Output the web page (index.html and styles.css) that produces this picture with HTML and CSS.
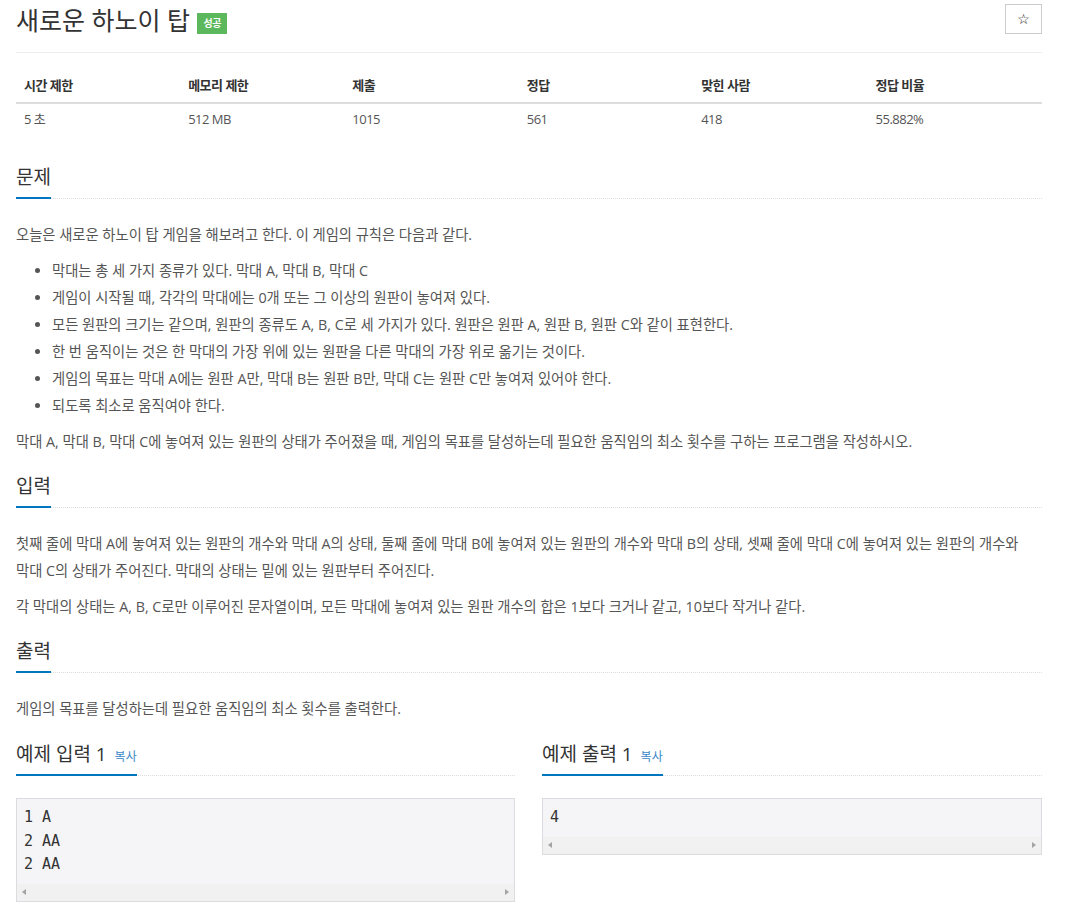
FILE: index.html
```html
<!DOCTYPE html>
<html lang="ko">
<head>
<meta charset="utf-8">
<title>새로운 하노이 탑</title>
<link rel="stylesheet" href="styles.css">
</head>
<body>
<div class="container">
  <div class="page-header">
    <h1 class="title">새로운 하노이 탑 <span class="label-success">성공</span></h1>
    <button class="star-btn" type="button">☆</button>
  </div>

  <table class="info-table">
    <thead>
      <tr>
        <th class="w16">시간 제한</th>
        <th class="w16">메모리 제한</th>
        <th class="w17">제출</th>
        <th class="w17">정답</th>
        <th class="w17">맞힌 사람</th>
        <th class="w17">정답 비율</th>
      </tr>
    </thead>
    <tbody>
      <tr>
        <td>5 초</td>
        <td>512 MB</td>
        <td>1015</td>
        <td>561</td>
        <td>418</td>
        <td>55.882%</td>
      </tr>
    </tbody>
  </table>

  <section class="problem-section">
    <div class="headline"><h2>문제</h2></div>
    <div class="problem-text">
      <p>오늘은 새로운 하노이 탑 게임을 해보려고 한다. 이 게임의 규칙은 다음과 같다.</p>
      <ul>
        <li>막대는 총 세 가지 종류가 있다. 막대 A, 막대 B, 막대 C</li>
        <li>게임이 시작될 때, 각각의 막대에는 0개 또는 그 이상의 원판이 놓여져 있다.</li>
        <li>모든 원판의 크기는 같으며, 원판의 종류도 A, B, C로 세 가지가 있다. 원판은 원판 A, 원판 B, 원판 C와 같이 표현한다.</li>
        <li>한 번 움직이는 것은 한 막대의 가장 위에 있는 원판을 다른 막대의 가장 위로 옮기는 것이다.</li>
        <li>게임의 목표는 막대 A에는 원판 A만, 막대 B는 원판 B만, 막대 C는 원판 C만 놓여져 있어야 한다.</li>
        <li>되도록 최소로 움직여야 한다.</li>
      </ul>
      <p>막대 A, 막대 B, 막대 C에 놓여져 있는 원판의 상태가 주어졌을 때, 게임의 목표를 달성하는데 필요한 움직임의 최소 횟수를 구하는 프로그램을 작성하시오.</p>
    </div>
  </section>

  <section class="problem-section">
    <div class="headline"><h2>입력</h2></div>
    <div class="problem-text">
      <p>첫째 줄에 막대 A에 놓여져 있는 원판의 개수와 막대 A의 상태, 둘째 줄에 막대 B에 놓여져 있는 원판의 개수와 막대 B의 상태, 셋째 줄에 막대 C에 놓여져 있는 원판의 개수와 막대 C의 상태가 주어진다. 막대의 상태는 밑에 있는 원판부터 주어진다.</p>
      <p>각 막대의 상태는 A, B, C로만 이루어진 문자열이며, 모든 막대에 놓여져 있는 원판 개수의 합은 1보다 크거나 같고, 10보다 작거나 같다.</p>
    </div>
  </section>

  <section class="problem-section">
    <div class="headline"><h2>출력</h2></div>
    <div class="problem-text">
      <p>게임의 목표를 달성하는데 필요한 움직임의 최소 횟수를 출력한다.</p>
    </div>
  </section>

  <div class="samples">
    <section class="sample">
      <div class="headline"><h2>예제 입력 1 <button class="copy-btn" type="button">복사</button></h2></div>
      <div class="pre-box">
        <pre class="sampledata">1 A
2 AA
2 AA</pre>
        <div class="hscroll"><span class="arr arr-left"></span><span class="arr arr-right"></span></div>
      </div>
    </section>
    <section class="sample">
      <div class="headline"><h2>예제 출력 1 <button class="copy-btn" type="button">복사</button></h2></div>
      <div class="pre-box">
        <pre class="sampledata">4</pre>
        <div class="hscroll"><span class="arr arr-left"></span><span class="arr arr-right"></span></div>
      </div>
    </section>
  </div>
</div>
</body>
</html>
```

FILE: styles.css
```css
* { box-sizing: border-box; }

html, body {
  margin: 0;
  padding: 0;
  background: #fff;
}

body {
  font-family: "Open Sans", "Noto Sans CJK KR", sans-serif;
  font-size: 14px;
  color: #555;
}

.container {
  width: 1026px;
  margin-left: 16px;
}

.page-header {
  display: flex;
  justify-content: space-between;
  align-items: flex-start;
  border-bottom: 1px solid #eee;
  height: 53px;
}

.title {
  margin: 5px 0 0;
  font-size: 25px;
  line-height: 30px;
  font-weight: 400;
  color: #333;
}

.label-success {
  display: inline-block;
  vertical-align: 3px;
  margin-left: 1px;
  background: #5cb85c;
  color: #fff;
  font-size: 10px;
  font-weight: 700;
  letter-spacing: -0.5px;
  line-height: 13px;
  padding: 4px 6px 4px 6px;
}

.star-btn {
  margin-top: 4px;
  width: 37px;
  height: 30px;
  border: 1px solid #ccc;
  background: #fff;
  color: #111;
  font-family: "DejaVu Sans", sans-serif;
  font-size: 14px;
  padding: 0;
}

.info-table {
  width: 100%;
  border-collapse: collapse;
  margin-top: 15px;
  margin-bottom: 33px;
  font-size: 13px;
  letter-spacing: -0.5px;
}

.info-table th {
  text-align: left;
  font-weight: 700;
  color: #333;
  padding: 8px 8px;
  line-height: 18px;
  border-bottom: 2px solid #ddd;
}

.info-table td {
  padding: 6px 8px;
  line-height: 18px;
}

.w16 { width: 16%; }
.w17 { width: 17%; }

.problem-section {
  margin-top: 21px;
}

.headline {
  border-bottom: 1px dotted #ddd;
  margin-bottom: 22px;
}

.headline h2 {
  display: inline-block;
  margin: 0 0 -1px;
  padding-bottom: 9px;
  font-size: 19px;
  line-height: 21px;
  font-weight: 400;
  color: #333;
  border-bottom: 2px solid #0076c0;
}

.problem-text {
  font-size: 14.3px;
  line-height: 27px;
  word-break: keep-all;
}

.problem-text p {
  margin: 0 0 9px;
}

.problem-text ul {
  margin: 0 0 9px;
  padding-left: 36px;
}

.samples {
  display: grid;
  grid-template-columns: 499px 500px;
  column-gap: 27px;
  margin-top: 22px;
}

.copy-btn {
  border: 0;
  background: none;
  padding: 0;
  margin-left: 3px;
  font-family: "Open Sans", "Noto Sans CJK KR", sans-serif;
  font-size: 12px;
  color: #3a87c8;
}

.pre-box {
  border: 1px solid #dcdce0;
  background: #f5f5f7;
}

.sampledata {
  margin: 0;
  padding: 7px 7px 7px;
  font-family: "DejaVu Sans Mono", monospace;
  font-size: 15px;
  line-height: 23.5px;
  color: #333;
}

.hscroll {
  position: relative;
  height: 17px;
  background: #f1f1f1;
}

.arr {
  position: absolute;
  top: 5px;
  width: 0;
  height: 0;
  border-top: 3.5px solid transparent;
  border-bottom: 3.5px solid transparent;
}

.arr-left {
  left: 5px;
  border-right: 4px solid #a3a3a3;
}

.arr-right {
  right: 5px;
  border-left: 4px solid #a3a3a3;
}
```
